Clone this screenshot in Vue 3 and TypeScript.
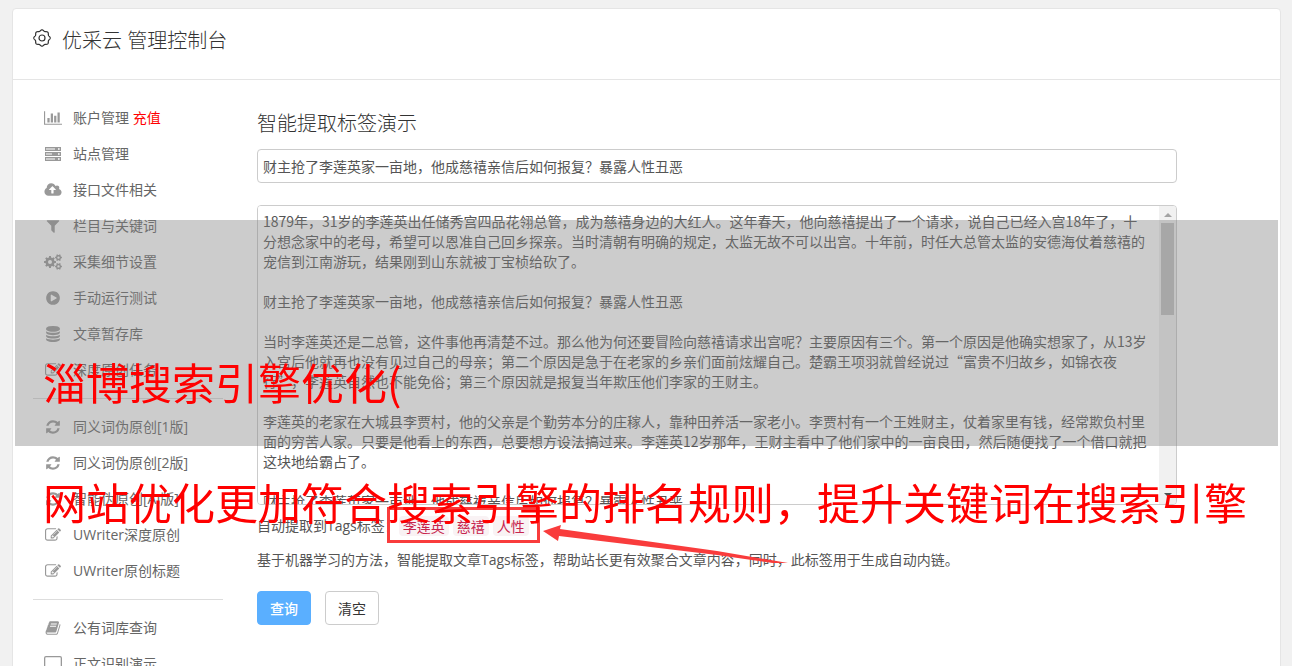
<script setup lang="ts">
import { ref } from 'vue'

interface Icon {
  box: string
  width: number
  height: number
  d: string
}

interface Entry {
  icon: string
  label: string
  extra?: string
}

/** Closed toothed wheel with an optional round hole. */
function gear(cx: number, cy: number, outer: number, inner: number, hole: number, teeth: number): string {
  const points: string[] = []
  const step = (Math.PI * 2) / teeth
  const add = (radius: number, angle: number) =>
    points.push(`${(cx + radius * Math.cos(angle)).toFixed(2)} ${(cy + radius * Math.sin(angle)).toFixed(2)}`)
  for (let i = 0; i < teeth; i++) {
    const a = i * step
    add(inner, a - step * 0.28)
    add(outer, a - step * 0.2)
    add(outer, a + step * 0.2)
    add(inner, a + step * 0.28)
  }
  let path = `M${points.join('L')}Z`
  if (hole > 0) {
    path += `M${cx - hole} ${cy}a${hole} ${hole} 0 1 0 ${hole * 2} 0a${hole} ${hole} 0 1 0 ${-hole * 2} 0Z`
  }
  return path
}

/** Smooth scalloped ring used by the console logo. */
function scallop(cx: number, cy: number, radius: number, depth: number, lobes: number): string {
  const points: string[] = []
  for (let i = 0; i < 144; i++) {
    const a = (i / 144) * Math.PI * 2
    const r = radius + depth * Math.cos(lobes * a)
    points.push(`${(cx + r * Math.sin(a)).toFixed(2)} ${(cy - r * Math.cos(a)).toFixed(2)}`)
  }
  return `M${points.join('L')}Z`
}

const logoRing = scallop(9, 9, 7.6, 0.6, 8)

const icons: Record<string, Icon> = {
  chart: {
    box: '0 0 2048 1792', width: 18, height: 16,
    d: 'M640 896v512h-256v-512h256zm384-512v1024h-256v-1024h256zm1024 1152v128h-2048v-1536h128v1408h1920zm-640-896v768h-256v-768h256zm384-384v1152h-256v-1152h256z',
  },
  server: {
    box: '0 0 16 14', width: 16, height: 14,
    d: 'M0 0h16v4H0zM1 1.5v1h9v-1zM13 1.3v1.4h1.6V1.3zM0 5h16v4H0zM1 6.5v1h6v-1zM13 6.3v1.4h1.6V6.3zM0 10h16v4H0zM1 11.5v1h9v-1zM13 11.3v1.4h1.6V11.3z',
  },
  cloud: {
    box: '0 0 1920 1792', width: 18, height: 16,
    d: 'M1280 864q0-14-9-23l-352-352q-9-9-23-9t-23 9l-351 351q-10 12-10 24 0 14 9 23t23 9h224v352q0 13 9.5 22.5t22.5 9.5h192q13 0 22.5-9.5t9.5-22.5v-352h224q13 0 22.5-9.5t9.5-22.5zm640 288q0 159-112.5 271.5t-271.5 112.5h-1088q-185 0-316.5-131.5t-131.5-316.5q0-130 70-240t188-165q-2-30-2-43 0-212 150-362t362-150q156 0 285.5 87t188.5 231q71-62 166-62 106 0 181 75t75 181q0 76-41 138 130 31 213.5 135.5t83.5 238.5z',
  },
  filter: {
    box: '0 0 1792 1792', width: 16, height: 16,
    d: 'M1595 295q17 41-14 70l-493 493v742q0 42-39 59-13 5-25 5-27 0-45-19l-256-256q-19-19-19-45v-486l-493-493q-31-29-14-70 17-39 59-39h1280q42 0 59 39z',
  },
  cogs: {
    box: '0 0 18 16', width: 18, height: 16,
    d: gear(6, 8, 6, 4.6, 2, 8) + gear(14.5, 3.6, 3.5, 2.6, 1.2, 6) + gear(14.5, 12.4, 3.5, 2.6, 1.2, 6),
  },
  play: {
    box: '0 0 1792 1792', width: 16, height: 16,
    d: 'M896 128q209 0 385.5 103t279.5 279.5 103 385.5-103 385.5-279.5 279.5-385.5 103-385.5-103-279.5-279.5-103-385.5 103-385.5 279.5-279.5 385.5-103zm384 823q32-18 32-55t-32-55l-544-320q-31-19-64-1-32 19-32 56v640q0 37 32 56 16 8 32 8 17 0 32-9z',
  },
  database: {
    box: '0 0 1792 1792', width: 16, height: 16,
    d: 'M896 768q237 0 443-43t325-127v170q0 69-103 128t-280 93.5-385 34.5-385-34.5-280-93.5-103-128v-170q119 84 325 127t443 43zm0 768q237 0 443-43t325-127v170q0 69-103 128t-280 93.5-385 34.5-385-34.5-280-93.5-103-128v-170q119 84 325 127t443 43zm0-384q237 0 443-43t325-127v170q0 69-103 128t-280 93.5-385 34.5-385-34.5-280-93.5-103-128v-170q119 84 325 127t443 43zm0-1152q208 0 385 34.5t280 93.5 103 128v128q0 69-103 128t-280 93.5-385 34.5-385-34.5-280-93.5-103-128v-128q0-69 103-128t280-93.5 385-34.5z',
  },
  edit: {
    box: '0 0 1792 1792', width: 16, height: 16,
    d: 'M888 1184l116-116-152-152-116 116v56h96v96h56zm440-720q-16-16-33 1l-350 350q-17 17-1 33t33-1l350-350q17-17 1-33zm80 594v190q0 119-84.5 203.5t-203.5 84.5h-832q-119 0-203.5-84.5t-84.5-203.5v-832q0-119 84.5-203.5t203.5-84.5h832q63 0 117 25 15 7 18 23 3 17-9 29l-49 49q-14 14-32 8-23-6-45-6h-832q-66 0-113 47t-47 113v832q0 66 47 113t113 47h832q66 0 113-47t47-113v-126q0-13 9-22l64-64q15-15 35-7t20 29zm-96-738l288 288-672 672h-288v-288zm444 132l-92 92-288-288 92-92q28-28 68-28t68 28l152 152q28 28 28 68t-28 68z',
  },
  refresh: {
    box: '0 0 1792 1792', width: 16, height: 16,
    d: 'M1639 1056q0 5-1 7-64 268-268 434.5t-478 166.5q-146 0-282.5-55t-243.5-157l-129 129q-19 19-45 19t-45-19-19-45v-448q0-26 19-45t45-19h448q26 0 45 19t19 45-19 45l-137 137q71 66 161 102t187 36q134 0 250-65t186-179q11-17 53-117 8-23 30-23h192q13 0 22.5 9.5t9.5 22.5zm25-800v448q0 26-19 45t-45 19h-448q-26 0-45-19t-19-45 19-45l138-138q-148-137-349-137-134 0-250 65t-186 179q-11 17-53 117-8 23-30 23h-199q-13 0-22.5-9.5t-9.5-22.5v-7q65-268 270-434.5t480-166.5q146 0 284 55.5t245 156.5l130-129q19-19 45-19t45 19 19 45z',
  },
  book: {
    box: '0 0 1792 1792', width: 16, height: 16,
    d: 'M1703 478q40 57 18 129l-275 906q-19 64-76.5 107.5t-122.5 43.5h-923q-77 0-148.5-53.5t-99.5-131.5q-24-67-2-127 0-4 3-27t4-37q1-8-3-21.5t-3-19.5q2-11 8-21t16.5-23.5 16.5-23.5q23-38 45-91.5t30-91.5q3-10 .5-30t-.5-28q3-11 17-28t17-23q21-36 42-92t25-90q1-9-2.5-32t.5-28q4-13 22-30.5t22-22.5q19-26 42.5-84.5t27.5-96.5q1-8-3-25.5t-2-26.5q2-8 9-18t18-23 17-21q8-12 16.5-30.5t15-35 16-36 19.5-32 26.5-23.5 36-11.5 47.5 5.5l-1 3q38-9 51-9h761q74 0 114 56t18 130l-274 906q-36 119-71.5 153.5t-128.5 34.5h-869q-27 0-38 15-11 16-1 43 24 70 144 70h923q29 0 56-15.5t35-41.5l300-987q7-22 5-57 38 15 59 43zm-1064 2q-4 13 2 22.5t20 9.5h608q13 0 25.5-9.5t16.5-22.5l21-64q4-13-2-22.5t-20-9.5h-608q-13 0-25.5 9.5t-16.5 22.5zm-83 256q-4 13 2 22.5t20 9.5h608q13 0 25.5-9.5t16.5-22.5l21-64q4-13-2-22.5t-20-9.5h-608q-13 0-25.5 9.5t-16.5 22.5z',
  },
  screen: {
    box: '0 0 18 16', width: 18, height: 16,
    d: 'M2 0h14a2 2 0 0 1 2 2v9a2 2 0 0 1-2 2h-5v2h2v1H5v-1h2v-2H2a2 2 0 0 1-2-2V2a2 2 0 0 1 2-2zM2 1.3a.7.7 0 0 0-.7.7v9a.7.7 0 0 0 .7.7h14a.7.7 0 0 0 .7-.7V2a.7.7 0 0 0-.7-.7z',
  },
}

const groups: Entry[][] = [
  [
    { icon: 'chart', label: '账户管理', extra: '充值' },
    { icon: 'server', label: '站点管理' },
    { icon: 'cloud', label: '接口文件相关' },
    { icon: 'filter', label: '栏目与关键词' },
    { icon: 'cogs', label: '采集细节设置' },
    { icon: 'play', label: '手动运行测试' },
    { icon: 'database', label: '文章暂存库' },
    { icon: 'edit', label: '深度原创任务' },
  ],
  [
    { icon: 'refresh', label: '同义词伪原创[1版]' },
    { icon: 'refresh', label: '同义词伪原创[2版]' },
    { icon: 'refresh', label: '智能伪原创[AI版]' },
    { icon: 'edit', label: 'UWriter深度原创' },
    { icon: 'edit', label: 'UWriter原创标题' },
  ],
  [
    { icon: 'book', label: '公有词库查询' },
    { icon: 'screen', label: '正文识别演示' },
  ],
]

const headline = '财主抢了李莲英家一亩地，他成慈禧亲信后如何报复？暴露人性丑恶'
const title = ref(headline)
const body = ref(
  [
    '1879年，31岁的李莲英出任储秀宫四品花翎总管，成为慈禧身边的大红人。这年春天，他向慈禧提出了一个请求，说自己已经入宫18年了，十分想念家中的老母，希望可以恩准自己回乡探亲。当时清朝有明确的规定，太监无故不可以出宫。十年前，时任大总管太监的安德海仗着慈禧的宠信到江南游玩，结果刚到山东就被丁宝桢给砍了。',
    headline,
    '当时李莲英还是二总管，这件事他再清楚不过。那么他为何还要冒险向慈禧请求出宫呢？主要原因有三个。第一个原因是他确实想家了，从13岁入宫后他就再也没有见过自己的母亲；第二个原因是急于在老家的乡亲们面前炫耀自己。楚霸王项羽就曾经说过“富贵不归故乡，如锦衣夜行”，李莲英自然也不能免俗；第三个原因就是报复当年欺压他们李家的王财主。',
    '李莲英的老家在大城县李贾村，他的父亲是个勤劳本分的庄稼人，靠种田养活一家老小。李贾村有一个王姓财主，仗着家里有钱，经常欺负村里面的穷苦人家。只要是他看上的东西，总要想方设法搞过来。李莲英12岁那年，王财主看中了他们家中的一亩良田，然后随便找了一个借口就把这块地给霸占了。',
    headline,
  ].join('\n\n'),
)
const tags = ref(['李莲英', '慈禧', '人性'])

function clearAll(): void {
  title.value = ''
  body.value = ''
  tags.value = []
}
</script>

<template>
  <div class="page">
    <div class="card">
      <header class="top">
        <svg class="logo" viewBox="0 0 18 18" aria-hidden="true">
          <path :d="logoRing" />
          <circle cx="9" cy="9" r="3" />
        </svg>
        <h1>优采云 管理控制台</h1>
      </header>

      <div class="columns">
        <nav class="side">
          <ul v-for="(group, g) in groups" :key="g">
            <li v-for="entry in group" :key="entry.label">
              <a href="#">
                <span class="glyph">
                  <svg
                    :viewBox="icons[entry.icon].box"
                    :width="icons[entry.icon].width"
                    :height="icons[entry.icon].height"
                    aria-hidden="true"
                  >
                    <path fill-rule="evenodd" :d="icons[entry.icon].d" />
                  </svg>
                </span>
                <span>{{ entry.label }}<em v-if="entry.extra">&nbsp;{{ entry.extra }}</em></span>
              </a>
            </li>
          </ul>
        </nav>

        <main class="content">
          <h2>智能提取标签演示</h2>
          <form @submit.prevent>
            <input v-model="title" class="field" type="text" aria-label="标题" />
            <div class="editor">
              <textarea v-model="body" aria-label="正文" spellcheck="false"></textarea>
              <div class="bar" aria-hidden="true">
                <svg class="arrow up" viewBox="0 0 8 4"><path d="M4 0l4 4H0z" /></svg>
                <div class="thumb"></div>
                <svg class="arrow down" viewBox="0 0 8 4"><path d="M0 0h8L4 4z" /></svg>
              </div>
            </div>
            <div class="result">
              <span>自动提取到Tags标签：</span>
              <div class="tags">
                <code v-for="tag in tags" :key="tag">{{ tag }}</code>
                <svg class="pointer" viewBox="0 0 246 40" aria-hidden="true">
                  <path d="M0 7L18 1L17 5L174 27L245 39L230 39L174 31L16 12L15 17Z" />
                </svg>
              </div>
            </div>
            <p>基于机器学习的方法，智能提取文章Tags标签，帮助站长更有效聚合文章内容，同时，此标签用于生成自动内链。</p>
            <div class="actions">
              <button class="primary" type="submit">查询</button>
              <button type="button" @click="clearAll">清空</button>
            </div>
          </form>
        </main>
      </div>
    </div>

    <div class="band"></div>
    <div class="caption">
      <div>淄博搜索引擎优化(</div>
      <div>网站优化更加符合搜索引擎的排名规则，提升关键词在搜索引擎</div>
    </div>
  </div>
</template>

<style>
body {
  margin: 0;
  background: #f1f1f1;
}
</style>

<style scoped>
.page {
  position: relative;
  box-sizing: border-box;
  height: 100vh;
  overflow: hidden;
  padding: 8px 11px 0 12px;
  color: #555;
  font: 14px/20px "Open Sans", "Noto Sans CJK SC", sans-serif;
}
.card {
  border: 1px solid #e5e5e5;
  border-radius: 4px;
  background: #fff;
}
.top {
  display: flex;
  align-items: flex-start;
  gap: 11px;
  height: 50px;
  padding: 20px 20px 0;
  border-bottom: 1px solid #e5e5e5;
}
.logo {
  width: 18px;
  height: 18px;
  fill: none;
  stroke: #333;
  stroke-width: 1.2;
}
h1,
h2 {
  margin: 0;
  color: #333;
  font-size: 20px;
  font-weight: 300;
  line-height: 24px;
}
.columns {
  display: flex;
  gap: 34px;
  padding: 20px 103px 20px 20px;
}
.side {
  flex: none;
  width: 190px;
}
ul {
  margin: 0;
  padding: 0;
  list-style: none;
}
ul + ul {
  margin-top: 10px;
  padding-top: 10px;
  border-top: 1px solid #ddd;
}
.side a {
  display: flex;
  align-items: center;
  gap: 10px;
  height: 36px;
  padding-left: 10px;
  color: #666;
  text-decoration: none;
}
.glyph {
  display: flex;
  justify-content: center;
  width: 20px;
}
.glyph svg {
  fill: #999;
}
em {
  color: #f00;
  font-style: normal;
}
.content {
  flex: 1;
  min-width: 0;
  padding-top: 12px;
}
h2 {
  margin-bottom: 13px;
}
.field {
  display: block;
  box-sizing: border-box;
  width: 100%;
  height: 34px;
  margin: 0;
  padding: 0 5px;
  border: 1px solid #ccc;
  border-radius: 4px;
  color: #555;
  background: #fff;
  font: 14px/20px "Noto Sans CJK SC", sans-serif;
}
.editor {
  display: flex;
  box-sizing: border-box;
  height: 300px;
  margin-top: 22px;
  overflow: hidden;
  border: 1px solid #ccc;
  border-radius: 4px;
}
textarea {
  flex: 1;
  min-width: 0;
  margin: 0;
  padding: 5px 10px 5px 5px;
  border: 0;
  outline: 0;
  resize: none;
  color: #555;
  background: #fff;
  font: 14px/20px "Noto Sans CJK SC", sans-serif;
  text-spacing-trim: space-all;
  scrollbar-width: none;
}
.bar {
  display: flex;
  flex-direction: column;
  align-items: center;
  width: 17px;
  padding: 7px 0;
  background: #f1f1f1;
}
.arrow {
  width: 8px;
  height: 4px;
}
.up {
  fill: #a3a3a3;
}
.down {
  margin-top: auto;
  fill: #505050;
}
.thumb {
  width: 13px;
  height: 92px;
  margin-top: 6px;
  background: #c1c1c1;
}
.result {
  display: flex;
  align-items: center;
  margin-top: 11px;
}
.tags {
  position: relative;
  display: flex;
  gap: 4px;
}
.tags::after {
  position: absolute;
  inset: -9px -11px -7px -12px;
  border: 3px solid #f93c3c;
  content: "";
}
code {
  padding: 0 4px;
  border-radius: 4px;
  color: #c7254e;
  background: #f9f2f4;
  font: 14px/20px "Noto Sans CJK SC", monospace;
}
.pointer {
  position: absolute;
  top: 8px;
  left: 144px;
  width: 246px;
  height: 40px;
  fill: #f93c3c;
}
p {
  margin: 14px 0 21px;
}
.actions {
  display: flex;
  gap: 14px;
}
button {
  width: 54px;
  height: 34px;
  padding: 0;
  border: 1px solid #ccc;
  border-radius: 4px;
  color: #333;
  background: #fff;
  font: 14px/20px "Noto Sans CJK SC", sans-serif;
}
.primary {
  border-color: #5aafff;
  color: #fff;
  background: #5aafff;
  font-weight: 500;
}
.band {
  position: absolute;
  top: 220px;
  right: 14px;
  left: 15px;
  height: 226px;
  background: rgba(128, 128, 128, 0.4);
  pointer-events: none;
}
.caption {
  position: absolute;
  top: 321px;
  left: 43px;
  color: #f00;
  font: 43px/120px "Noto Sans CJK SC", sans-serif;
  white-space: nowrap;
  pointer-events: none;
}
</style>
